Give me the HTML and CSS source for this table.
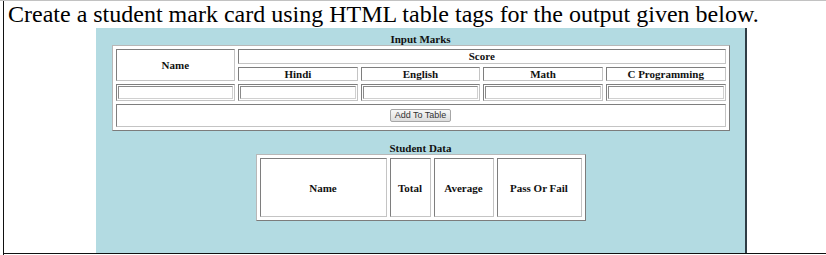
FILE: index.html
```html
<!DOCTYPE html>
<html>
<head>
<meta charset="utf-8">
<link rel="stylesheet" href="styles.css">
</head>
<body>
<div class="topline"></div>
<div class="frame">
  <div class="cell">
    <p class="question">Create a student mark card using HTML table tags for the output given below.</p>
    <div class="shot">
      <table class="marks">
        <caption>Input Marks</caption>
        <tr class="r1">
          <th rowspan="2">Name</th>
          <th colspan="4">Score</th>
        </tr>
        <tr class="r2">
          <th>Hindi</th>
          <th>English</th>
          <th>Math</th>
          <th>C Programming</th>
        </tr>
        <tr class="r3">
          <td><input type="text"></td>
          <td><input type="text"></td>
          <td><input type="text"></td>
          <td><input type="text"></td>
          <td><input type="text"></td>
        </tr>
        <tr class="r4">
          <td colspan="5" class="btncell"><button type="button">Add To Table</button></td>
        </tr>
      </table>
      <table class="data">
        <caption>Student Data</caption>
        <tr>
          <th class="c-name">Name</th>
          <th class="c-total">Total</th>
          <th class="c-avg">Average</th>
          <th class="c-pass">Pass Or Fail</th>
        </tr>
      </table>
    </div>
  </div>
</div>
</body>
</html>
```

FILE: styles.css
```css
html, body {
  margin: 0;
  padding: 0;
  background: #ffffff;
}

.topline {
  height: 1px;
  background: #c2c2c2;
}

.frame {
  margin-left: 3px;
  border-left: 1px solid #111111;
  height: 254px;
}

.cell {
  padding-left: 4px;
  border-bottom: 1px solid #111111;
}

.question {
  margin: 0;
  height: 27px;
  font-family: "Liberation Serif", "Times New Roman", serif;
  font-size: 24px;
  line-height: 27px;
  color: #000000;
  white-space: nowrap;
}

.shot {
  margin-left: 88px;
  width: 651px;
  height: 225px;
  background: #b3dbe2;
  border-right: 2px solid #2f3d45;
  padding-top: 5px;
  box-sizing: border-box;
}

table {
  border-collapse: separate;
  border-spacing: 3px;
  background: #ffffff;
  border: 1px solid;
  border-color: #b8b8b8 #7c7c7c #7c7c7c #b8b8b8;
  margin: 0 auto;
  table-layout: fixed;
  font-family: "Liberation Serif", "Times New Roman", serif;
  font-size: 11px;
  color: #111111;
}

caption {
  font-weight: bold;
  font-size: 11px;
  line-height: 12px;
  height: 12px;
  color: #111111;
  background: transparent;
}

th, td {
  border: 1px solid;
  border-color: #7e7e7e #c4c4c4 #c4c4c4 #7e7e7e;
  padding: 0;
  text-align: center;
  font-weight: bold;
  background: #ffffff;
}

.marks {
  width: 618px;
}

.marks .r1 th {
  line-height: 13px;
}

.marks .r2 th {
  line-height: 12px;
}

.marks .r3 td {
  padding: 1px;
  line-height: 0;
}

.marks input {
  display: block;
  box-sizing: border-box;
  width: 100%;
  height: 13px;
  margin: 0;
  padding: 0;
  border: 1px solid;
  border-color: #8a8a8a #d0d0d0 #d0d0d0 #8a8a8a;
  background: #ffffff;
}

.marks .btncell {
  padding: 4px 0;
  line-height: 0;
}

.marks button {
  height: 13px;
  padding: 0 4px;
  margin: 0;
  font-family: "Liberation Sans", Arial, sans-serif;
  font-size: 9px;
  line-height: 11px;
  color: #333333;
  border: 1px solid #a6a6a6;
  border-radius: 2px;
  background: linear-gradient(#f8f8f8, #dddddd);
  vertical-align: top;
}

.data {
  width: 330px;
  margin-top: 11px;
}

.data th {
  height: 57px;
  line-height: 14px;
}

.c-name { width: 125px; }
.c-total { width: 39px; }
.c-avg { width: 58px; }
.c-pass { width: 83px; }
```
